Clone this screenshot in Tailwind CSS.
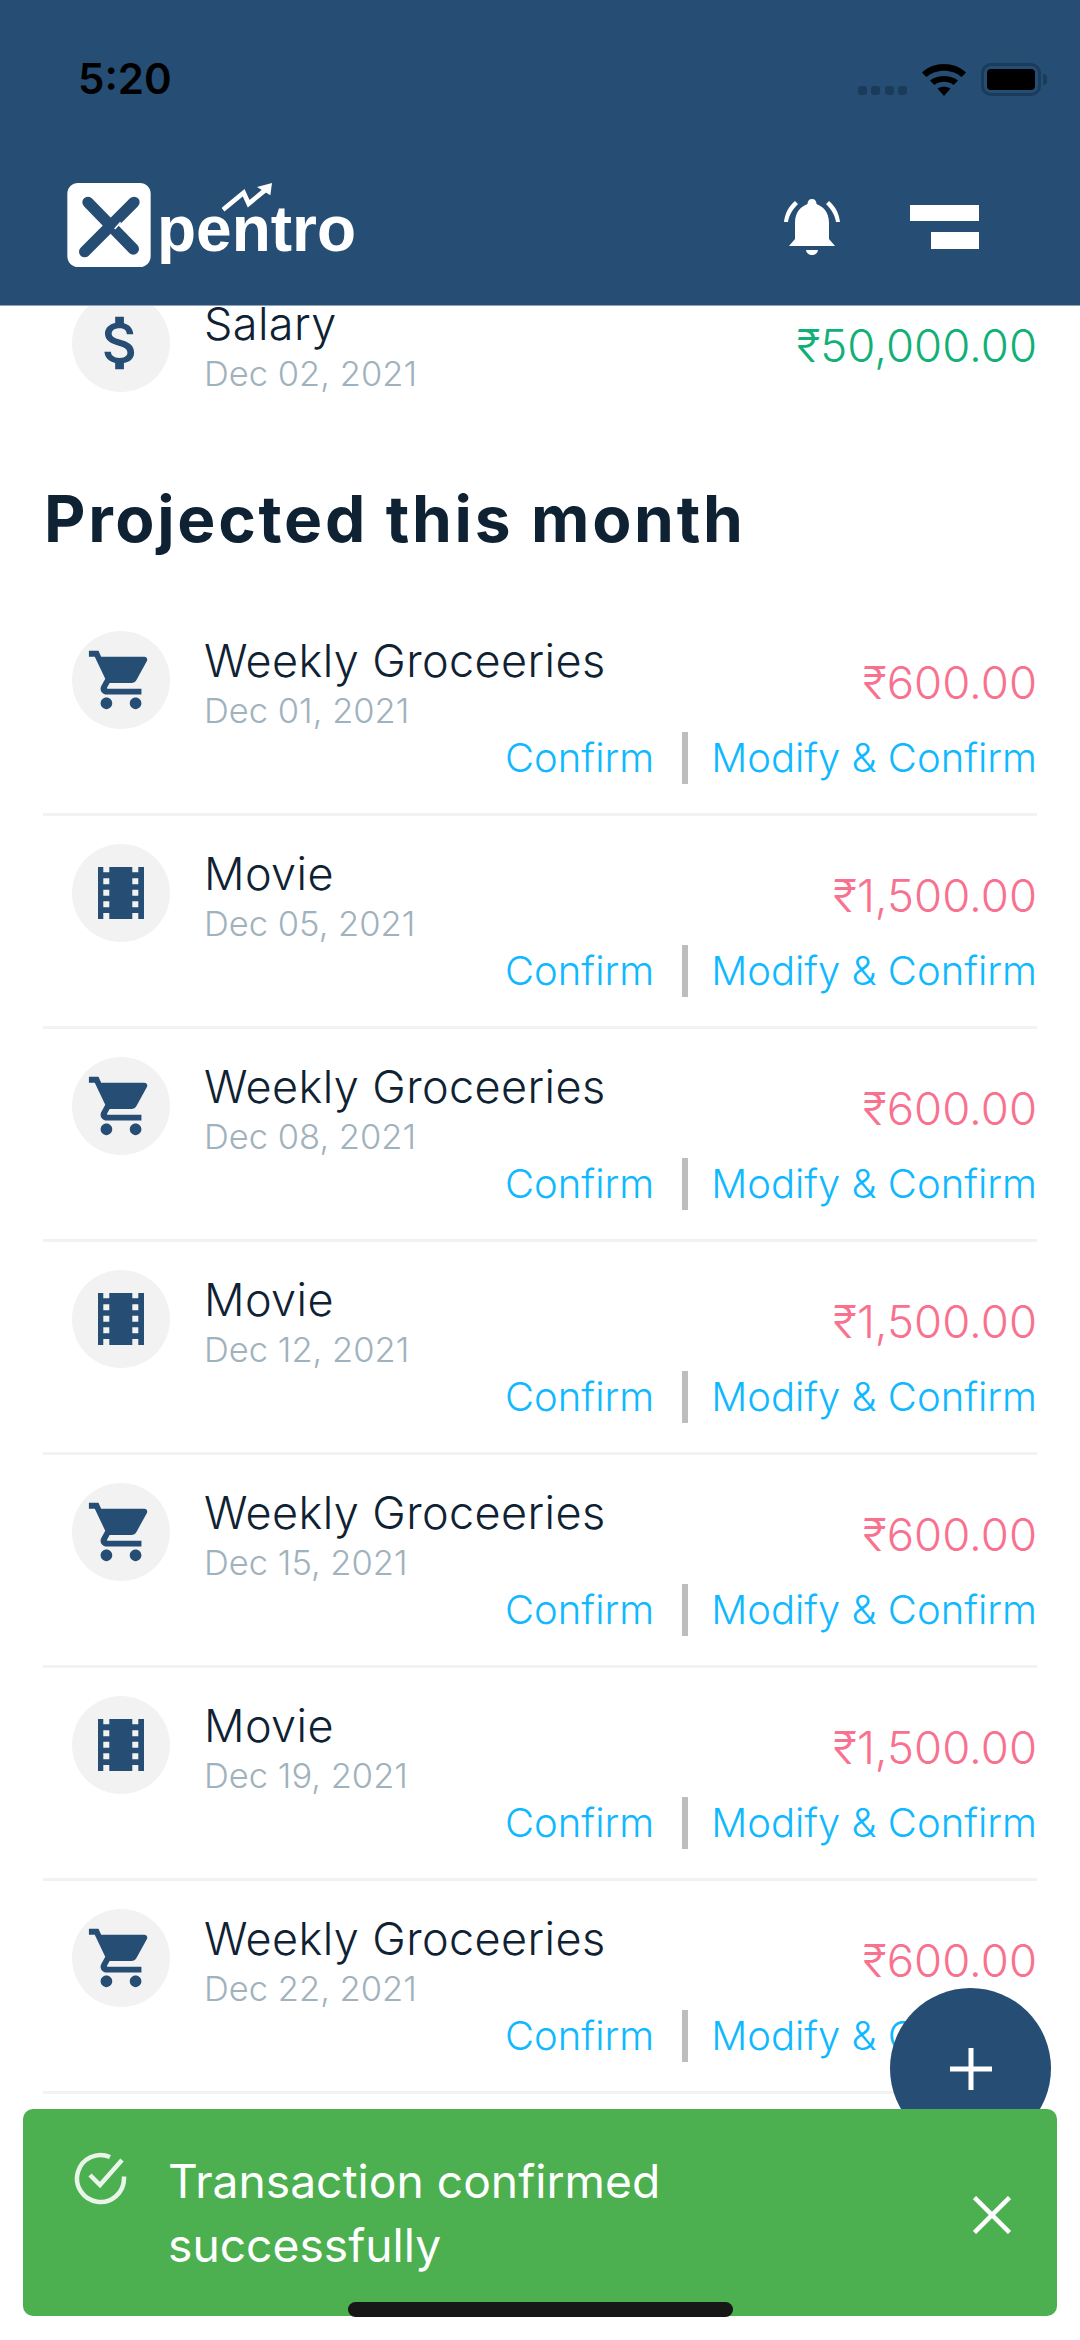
<!DOCTYPE html>
<html lang="en">
<head>
    <meta charset="UTF-8">
    <meta name="viewport" content="width=device-width, initial-scale=1.0">
    <title>Xpentro</title>
    <script src="https://cdn.jsdelivr.net/npm/@tailwindcss/browser@4"></script>
</head>
<body class="bg-white font-['Inter',sans-serif]">
    <!-- Shared icons -->
    <svg class="hidden">
        <symbol id="cart" viewBox="0 0 24 24"><path d="M7 18c-1.1 0-1.99.9-1.99 2S5.9 22 7 22s2-.9 2-2-.9-2-2-2zM1 2v2h2l3.6 7.59-1.35 2.45c-.16.28-.25.61-.25.96 0 1.1.9 2 2 2h12v-2H7.42c-.14 0-.25-.11-.25-.25l.03-.12.9-1.63h7.45c.75 0 1.41-.41 1.75-1.03l3.58-6.49c.08-.14.12-.31.12-.48 0-.55-.45-1-1-1H5.21l-.94-2H1zm16 16c-1.1 0-1.99.9-1.99 2s.89 2 1.99 2 2-.9 2-2-.9-2-2-2z"/></symbol>
        <symbol id="film" viewBox="0 0 46 52"><path fill-rule="evenodd" d="M0 0H46V52H0ZM5.3 0V5.3H11.3V0ZM34.3 0V5.3H40.3V0ZM5.3 11.3V17.3H11.3V11.3ZM34.3 11.3V17.3H40.3V11.3ZM5.3 22.7V28.7H11.3V22.7ZM34.3 22.7V28.7H40.3V22.7ZM5.3 34.3V40.3H11.3V34.3ZM34.3 34.3V40.3H40.3V34.3ZM5.3 46V52H11.3V46ZM34.3 46V52H40.3V46Z"/></symbol>
        <symbol id="dollar" viewBox="0 0 24 24"><path d="M11.8 10.9c-2.27-.59-3-1.2-3-2.15 0-1.09 1.01-1.85 2.7-1.85 1.78 0 2.44.85 2.5 2.1h2.21c-.07-1.72-1.12-3.3-3.21-3.81V3h-3v2.16c-1.94.42-3.5 1.68-3.5 3.61 0 2.31 1.91 3.46 4.7 4.13 2.5.6 3 1.48 3 2.41 0 .69-.49 1.79-2.7 1.79-2.06 0-2.87-.92-2.98-2.1h-2.2c.12 2.19 1.76 3.42 3.68 3.83V21h3v-2.15c1.95-.37 3.5-1.5 3.5-3.55 0-2.84-2.43-3.81-4.7-4.4z"/></symbol>
    </svg>

    <div class="relative w-[1080px] h-[2340px] overflow-hidden flex flex-col">
        <!-- Header -->
        <header class="relative z-10 h-[306px] shrink-0 bg-[#264d73] border-b border-[#8ea3b9]">
            <div class="flex items-center justify-between h-[158px] pl-[78px] pr-[33px]">
                <span class="text-[42px] font-semibold text-black leading-none">5:20</span>
                <div class="flex items-end gap-[15px]">
                    <div class="flex gap-[4.5px] mb-[1px]">
                        <span class="w-[9px] h-[9px] rounded-[3px] bg-[#1b3b5a]"></span>
                        <span class="w-[9px] h-[9px] rounded-[3px] bg-[#1b3b5a]"></span>
                        <span class="w-[9px] h-[9px] rounded-[3px] bg-[#1b3b5a]"></span>
                        <span class="w-[9px] h-[9px] rounded-[3px] bg-[#1b3b5a]"></span>
                    </div>
                    <svg class="w-[44px] h-[32px]" viewBox="0 0 44 32">
                        <path d="M0 8.5C12 -2.8 32 -2.8 44 8.5L39.6 13C30 4.5 14 4.5 4.4 13Z"/>
                        <path d="M8 16.5C15 10.5 29 10.5 36 16.5L31.6 21C26 16.8 18 16.8 12.4 21Z"/>
                        <path d="M15.5 24.5C19 22 25 22 28.5 24.5L22 32Z"/>
                    </svg>
                    <div class="flex items-center">
                        <div class="w-[60px] h-[33px] rounded-[10px] border-[3px] border-[#1b3b5a] p-[3px]">
                            <div class="w-full h-full rounded-[4px] bg-black"></div>
                        </div>
                        <div class="w-[4px] h-[11px] rounded-r-full bg-[#1b3b5a] ml-[2px]"></div>
                    </div>
                </div>
            </div>
            <div class="flex items-start justify-between pl-[67px] pr-[101px]">
                <!-- Logo -->
                <div class="relative flex mt-[25px]">
                    <svg class="w-[84px] h-[84px]" viewBox="0 0 250 252">
                        <rect width="250" height="252" rx="32" fill="#fff"/>
                        <path d="M62 58L198 198" stroke="#264d73" stroke-width="34" stroke-linecap="round" fill="none"/>
                        <path d="M200 58L52 206" stroke="#264d73" stroke-width="34" stroke-linecap="round" fill="none"/>
                        <path d="M142 138L160 118" stroke="#fff" stroke-width="5" fill="none"/>
                    </svg>
                    <span class="ml-[6px] text-[64px] leading-[84px] font-bold text-white font-['Liberation_Sans',sans-serif] mt-[4px]">pentro</span>
                    <svg class="absolute left-[155px] top-0 w-[52px] h-[30px]" viewBox="0 0 156 90">
                        <path d="M3 80L65 29L80 62L135 17" stroke="#fff" stroke-width="14" fill="none"/>
                        <path d="M105 12L150 0L145 37Z" fill="#fff"/>
                    </svg>
                </div>
                <div class="flex items-center gap-[69px] mt-[41px]">
                    <!-- Bell -->
                    <svg class="w-[58px] h-[56px]" viewBox="0 0 58 56" fill="#fff">
                        <path d="M1 23C2 14 6 7 12 2L15 5C10 10 6 16 5 23Z"/>
                        <path d="M57 23C56 14 52 7 46 2L43 5C48 10 52 16 53 23Z"/>
                        <path d="M29 0C32 0 33.5 2 33.5 5C39 7 46 12 46 24V40L52 47H6L12 40V24C12 12 19 7 24.500 5C24.500 2 26 0 29 0Z"/>
                        <path d="M23 51H35C34.500 54.500 32 56 29 56C26 56 23.500 54.500 23 51Z"/>
                    </svg>
                    <!-- Menu -->
                    <div class="flex flex-col items-end gap-[11px]">
                        <div class="w-[69px] h-[16px] bg-white"></div>
                        <div class="w-[48px] h-[17px] bg-white"></div>
                    </div>
                </div>
            </div>
        </header>

        <!-- Scrolled list -->
        <main class="flex-1 overflow-hidden">
            <div class="-mt-[12px] px-[43px]">
                <div class="flex items-center h-[98px] pl-[29px]">
                    <div class="w-[98px] h-[98px] rounded-full bg-[#f2f2f2] flex items-center justify-center shrink-0"><svg class="w-[70px] h-[70px] fill-[#264d73]"><use href="#dollar"/></svg></div>
                    <div class="ml-[34px] flex-1 font-light mt-[14px]">
                        <div class="text-[45px] leading-[50px] tracking-[0.4px] text-[#0f2233] -mt-[3px]">Salary</div>
                        <div class="text-[34.5px] leading-[50px] text-[#9fb2bd]">Dec 02, 2021</div>
                    </div>
                    <div class="text-[45.5px] font-light text-[#11b076] mt-[6px]">₹50,000.00</div>
                </div>

                <h2 class="mt-[89px] mb-[47px] h-[75px] text-[64px] leading-[75px] font-bold tracking-[2.7px] text-[#0f2233] pl-[1px]">Projected this month</h2>

                <div class="border-b-[3px] border-[#f2f2f2] pt-[28px] pb-[29px]">
                    <div class="flex items-center h-[98px] pl-[29px]">
                        <div class="w-[98px] h-[98px] rounded-full bg-[#f2f2f2] flex items-center justify-center shrink-0"><svg class="w-[70px] h-[70px] fill-[#264d73]"><use href="#cart"/></svg></div>
                        <div class="ml-[34px] flex-1 font-light mt-[14px]">
                            <div class="text-[45px] leading-[50px] tracking-[0.4px] text-[#0f2233] -mt-[3px]">Weekly Groceeries</div>
                            <div class="text-[34.5px] leading-[50px] text-[#9fb2bd]">Dec 01, 2021</div>
                        </div>
                        <div class="text-[45.5px] font-light text-[#f8718f] mt-[6px]">₹600.00</div>
                    </div>
                    <div class="flex justify-end items-center h-[52px] mt-[3px] text-[40px] font-light text-[#0fb8ff]">
                        <span>Confirm</span><span class="w-[6px] h-[52px] bg-[#bdbdbd] ml-[28px] mr-[23px]"></span><span>Modify &amp; Confirm</span>
                    </div>
                </div>

                <div class="border-b-[3px] border-[#f2f2f2] pt-[28px] pb-[29px]">
                    <div class="flex items-center h-[98px] pl-[29px]">
                        <div class="w-[98px] h-[98px] rounded-full bg-[#f2f2f2] flex items-center justify-center shrink-0"><svg class="w-[46px] h-[52px] fill-[#264d73]"><use href="#film"/></svg></div>
                        <div class="ml-[34px] flex-1 font-light mt-[14px]">
                            <div class="text-[45px] leading-[50px] tracking-[0.4px] text-[#0f2233] -mt-[3px]">Movie</div>
                            <div class="text-[34.5px] leading-[50px] text-[#9fb2bd]">Dec 05, 2021</div>
                        </div>
                        <div class="text-[45.5px] font-light text-[#f8718f] mt-[6px]">₹1,500.00</div>
                    </div>
                    <div class="flex justify-end items-center h-[52px] mt-[3px] text-[40px] font-light text-[#0fb8ff]">
                        <span>Confirm</span><span class="w-[6px] h-[52px] bg-[#bdbdbd] ml-[28px] mr-[23px]"></span><span>Modify &amp; Confirm</span>
                    </div>
                </div>

                <div class="border-b-[3px] border-[#f2f2f2] pt-[28px] pb-[29px]">
                    <div class="flex items-center h-[98px] pl-[29px]">
                        <div class="w-[98px] h-[98px] rounded-full bg-[#f2f2f2] flex items-center justify-center shrink-0"><svg class="w-[70px] h-[70px] fill-[#264d73]"><use href="#cart"/></svg></div>
                        <div class="ml-[34px] flex-1 font-light mt-[14px]">
                            <div class="text-[45px] leading-[50px] tracking-[0.4px] text-[#0f2233] -mt-[3px]">Weekly Groceeries</div>
                            <div class="text-[34.5px] leading-[50px] text-[#9fb2bd]">Dec 08, 2021</div>
                        </div>
                        <div class="text-[45.5px] font-light text-[#f8718f] mt-[6px]">₹600.00</div>
                    </div>
                    <div class="flex justify-end items-center h-[52px] mt-[3px] text-[40px] font-light text-[#0fb8ff]">
                        <span>Confirm</span><span class="w-[6px] h-[52px] bg-[#bdbdbd] ml-[28px] mr-[23px]"></span><span>Modify &amp; Confirm</span>
                    </div>
                </div>

                <div class="border-b-[3px] border-[#f2f2f2] pt-[28px] pb-[29px]">
                    <div class="flex items-center h-[98px] pl-[29px]">
                        <div class="w-[98px] h-[98px] rounded-full bg-[#f2f2f2] flex items-center justify-center shrink-0"><svg class="w-[46px] h-[52px] fill-[#264d73]"><use href="#film"/></svg></div>
                        <div class="ml-[34px] flex-1 font-light mt-[14px]">
                            <div class="text-[45px] leading-[50px] tracking-[0.4px] text-[#0f2233] -mt-[3px]">Movie</div>
                            <div class="text-[34.5px] leading-[50px] text-[#9fb2bd]">Dec 12, 2021</div>
                        </div>
                        <div class="text-[45.5px] font-light text-[#f8718f] mt-[6px]">₹1,500.00</div>
                    </div>
                    <div class="flex justify-end items-center h-[52px] mt-[3px] text-[40px] font-light text-[#0fb8ff]">
                        <span>Confirm</span><span class="w-[6px] h-[52px] bg-[#bdbdbd] ml-[28px] mr-[23px]"></span><span>Modify &amp; Confirm</span>
                    </div>
                </div>

                <div class="border-b-[3px] border-[#f2f2f2] pt-[28px] pb-[29px]">
                    <div class="flex items-center h-[98px] pl-[29px]">
                        <div class="w-[98px] h-[98px] rounded-full bg-[#f2f2f2] flex items-center justify-center shrink-0"><svg class="w-[70px] h-[70px] fill-[#264d73]"><use href="#cart"/></svg></div>
                        <div class="ml-[34px] flex-1 font-light mt-[14px]">
                            <div class="text-[45px] leading-[50px] tracking-[0.4px] text-[#0f2233] -mt-[3px]">Weekly Groceeries</div>
                            <div class="text-[34.5px] leading-[50px] text-[#9fb2bd]">Dec 15, 2021</div>
                        </div>
                        <div class="text-[45.5px] font-light text-[#f8718f] mt-[6px]">₹600.00</div>
                    </div>
                    <div class="flex justify-end items-center h-[52px] mt-[3px] text-[40px] font-light text-[#0fb8ff]">
                        <span>Confirm</span><span class="w-[6px] h-[52px] bg-[#bdbdbd] ml-[28px] mr-[23px]"></span><span>Modify &amp; Confirm</span>
                    </div>
                </div>

                <div class="border-b-[3px] border-[#f2f2f2] pt-[28px] pb-[29px]">
                    <div class="flex items-center h-[98px] pl-[29px]">
                        <div class="w-[98px] h-[98px] rounded-full bg-[#f2f2f2] flex items-center justify-center shrink-0"><svg class="w-[46px] h-[52px] fill-[#264d73]"><use href="#film"/></svg></div>
                        <div class="ml-[34px] flex-1 font-light mt-[14px]">
                            <div class="text-[45px] leading-[50px] tracking-[0.4px] text-[#0f2233] -mt-[3px]">Movie</div>
                            <div class="text-[34.5px] leading-[50px] text-[#9fb2bd]">Dec 19, 2021</div>
                        </div>
                        <div class="text-[45.5px] font-light text-[#f8718f] mt-[6px]">₹1,500.00</div>
                    </div>
                    <div class="flex justify-end items-center h-[52px] mt-[3px] text-[40px] font-light text-[#0fb8ff]">
                        <span>Confirm</span><span class="w-[6px] h-[52px] bg-[#bdbdbd] ml-[28px] mr-[23px]"></span><span>Modify &amp; Confirm</span>
                    </div>
                </div>

                <div class="border-b-[3px] border-[#f2f2f2] pt-[28px] pb-[29px]">
                    <div class="flex items-center h-[98px] pl-[29px]">
                        <div class="w-[98px] h-[98px] rounded-full bg-[#f2f2f2] flex items-center justify-center shrink-0"><svg class="w-[70px] h-[70px] fill-[#264d73]"><use href="#cart"/></svg></div>
                        <div class="ml-[34px] flex-1 font-light mt-[14px]">
                            <div class="text-[45px] leading-[50px] tracking-[0.4px] text-[#0f2233] -mt-[3px]">Weekly Groceeries</div>
                            <div class="text-[34.5px] leading-[50px] text-[#9fb2bd]">Dec 22, 2021</div>
                        </div>
                        <div class="text-[45.5px] font-light text-[#f8718f] mt-[6px]">₹600.00</div>
                    </div>
                    <div class="flex justify-end items-center h-[52px] mt-[3px] text-[40px] font-light text-[#0fb8ff]">
                        <span>Confirm</span><span class="w-[6px] h-[52px] bg-[#bdbdbd] ml-[28px] mr-[23px]"></span><span>Modify &amp; Confirm</span>
                    </div>
                </div>
            </div>
        </main>

        <!-- Floating add button -->
        <div class="absolute left-[890px] top-[1988px] w-[161px] h-[161px] rounded-full bg-[#264d73] flex items-center justify-center">
            <svg class="w-[42px] h-[42px]" viewBox="0 0 42 42"><path d="M21 0V42M0 21H42" stroke="#fff" stroke-width="5"/></svg>
        </div>

        <!-- Toast -->
        <div class="absolute left-[23px] top-[2109px] w-[1034px] h-[207px] rounded-[10px] bg-[#4caf50] flex items-start pl-[51px] pr-[46px] pt-[43px] text-white">
            <svg class="w-[53px] h-[53px] shrink-0" viewBox="0 0 53 53" fill="none" stroke="#eaf5ea" stroke-width="4.500">
                <path d="M50 24.500V26.500A23.500 23.500 0 1 1 36 5"/>
                <path d="M16 23L26 33L48 8"/>
            </svg>
            <p class="ml-[41px] w-[620px] text-[46.2px] leading-[64px] -mt-[3px]">Transaction confirmed successfully</p>
            <svg class="w-[38px] h-[38px] shrink-0 ml-auto mt-[44px]" viewBox="0 0 38 38"><path d="M1.500 1.500L36.500 36.500M36.500 1.500L1.500 36.500" stroke="#fff" stroke-width="4.500"/></svg>
        </div>

        <!-- Home indicator -->
        <div class="absolute left-[348px] top-[2302px] w-[385px] h-[15px] rounded-full bg-[#171717]"></div>
    </div>
</body>
</html>
